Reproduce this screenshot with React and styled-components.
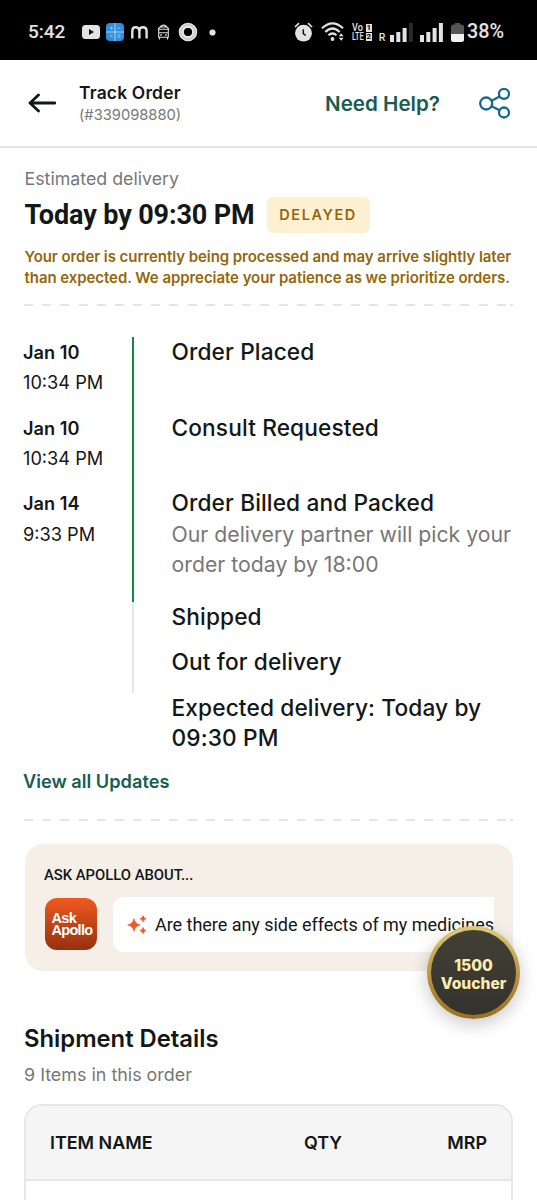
import React from "react";
import styled, { createGlobalStyle } from "styled-components";

const GlobalStyle = createGlobalStyle`
  *, *::before, *::after { box-sizing: border-box; }
  html, body { margin: 0; padding: 0; background: #fff; }
  body { width: 537px; height: 1200px; overflow: hidden; }
`;

const Screen = styled.div`
  position: relative;
  width: 537px;
  height: 1200px;
  overflow: hidden;
  background: #fff;
  color: #131716;
  font-family: Inter, sans-serif;
`;

const Text = styled.span`
  display: block;
  white-space: nowrap;
  font-family: ${(p) => p.$family || "Inter"}, sans-serif;
  font-size: ${(p) => p.$size}px;
  line-height: ${(p) => p.$line}px;
  font-weight: ${(p) => p.$weight || 400};
  letter-spacing: ${(p) => p.$track || 0}px;
  color: ${(p) => p.$color || "#131716"};
`;

const StatusBar = styled.header`
  height: 60px;
  background: #000;
  display: flex;
  align-items: center;
  justify-content: space-between;
  padding: 4px 33px 0 28px;
`;

const StatusGroup = styled.div`
  display: flex;
  align-items: center;
`;

const Icon = styled.svg`
  display: block;
  flex: none;
  margin-left: ${(p) => p.$gap || 0}px;
`;

const TopBar = styled.nav`
  height: 88px;
  display: flex;
  align-items: center;
  padding: 0 26px 0 28px;
  border-bottom: 2px solid #e3e4e4;
`;

const Titles = styled.div`
  margin-left: 23px;
  padding-top: 1px;
  flex: 1;
`;

const HelpLink = styled.div`
  margin-right: 39px;
  padding-top: 1px;
`;

const Summary = styled.section`
  height: 156px;
  padding: 19px 24.5px 0;
`;

const EtaRow = styled.div`
  display: flex;
  align-items: center;
  height: 38px;
  margin-top: 5px;
`;

const DelayBadge = styled.div`
  width: 103px;
  height: 36px;
  margin-left: 12px;
  border-radius: 6px;
  background: #fff0d2;
  display: flex;
  align-items: center;
  justify-content: center;
`;

const Notice = styled.div`
  margin-top: 11.5px;
`;

const Dashes = styled.hr`
  height: 2px;
  margin: 0 24px;
  border: 0;
  background: linear-gradient(#e6e6e6, #e6e6e6) right / 3px 2px no-repeat,
    repeating-linear-gradient(90deg, #e6e6e6 0 9px, transparent 9px 18.18px);
`;

const Timeline = styled.ol`
  list-style: none;
  margin: 0;
  padding: 30.8px 0 0 23px;
`;

const Step = styled.li`
  display: flex;
  height: ${(p) => p.$height}px;
`;

const StepDate = styled.div`
  width: 108.5px;
`;

const StepBody = styled.div`
  padding-left: 38px;
  border-left: ${(p) => (p.$state === "done" ? "2px solid #118a44" : p.$state === "todo" ? "2px solid #e6e6e6" : "2px solid transparent")};
`;

const Updates = styled.div`
  height: 65.2px;
  padding: 12.2px 0 0 23px;
`;

const AskCard = styled.section`
  height: 127px;
  margin: 23.5px 24.5px 0;
  padding: 20.5px 19px 0 19.5px;
  border-radius: 18px;
  background: #f6efe8;
`;

const AskRow = styled.div`
  display: flex;
  align-items: flex-start;
  margin-top: 12.5px;
`;

const AskLogo = styled.div`
  width: 52px;
  height: 52px;
  flex: none;
  margin: 1px 0 0 1px;
  border-radius: 12px;
  padding: 14px 0 0 6.5px;
  background: linear-gradient(#f0591f, #94310e);
`;

const PromptStrip = styled.div`
  flex: 1;
  margin-left: 15.5px;
  min-width: 0;
  height: 55px;
  overflow: hidden;
  display: flex;
  align-items: center;
  padding-left: 14px;
  border-radius: 11px 0 0 11px;
  background: #fff;
`;

const PromptText = styled.div`
  margin-left: 8.5px;
`;

const Shipment = styled.section`
  padding: 50.5px 24px 0;
`;

const ItemTable = styled.div`
  height: 120px;
  margin-top: 10px;
  border: 2px solid #e6e6e6;
  border-radius: 18px 18px 0 0;
  border-bottom: 0;
  overflow: hidden;
`;

const TableHead = styled.div`
  height: 75px;
  display: grid;
  grid-template-columns: 254px 1fr auto;
  align-items: center;
  padding: 2px 24px 0 24px;
  background: #f5f5f5;
  border-bottom: 2px solid #e6e6e6;
`;

const Voucher = styled.div`
  position: absolute;
  left: 427px;
  top: 926px;
  width: 93px;
  height: 93px;
  padding-top: 5px;
  border-radius: 50%;
  border: 4px solid transparent;
  background: linear-gradient(#424035, #34322d) padding-box,
    linear-gradient(180deg, #dccb78, #b69342 55%, #9a711e) border-box;
  box-shadow: 0 5px 18px rgba(0, 0, 0, 0.22);
  display: flex;
  flex-direction: column;
  align-items: center;
  justify-content: center;
`;

const INK = "#e2e2e2";

const NotificationIcons = () => (
  <>
    <Icon $gap={16} width="20" height="14" viewBox="0 0 20 14">
      <rect x="1" width="18" height="14" rx="3.5" fill={INK} />
      <path d="M8 4l5 3-5 3z" fill="#111" />
    </Icon>
    <Icon $gap={5} width="18" height="18" viewBox="0 0 18 18">
      <rect width="18" height="18" rx="4" fill="#2e8fdd" />
      <path d="M0 9h18M9 0v18" stroke="#c9e4f9" strokeWidth=".8" />
      <path d="M4 5.2h3M5.5 3.7v3M11.5 5.2h3M4.2 11.5l2.4 2.4m0-2.4l-2.4 2.4M11.5 12h3M11.5 14h3" stroke="#9ccdf4" strokeWidth=".9" />
    </Icon>
    <Icon $gap={7} width="17" height="13" viewBox="0 0 17 13">
      <path d="M1.3 12.5V4.8Q1.3 1.3 4.6 1.3T8.4 4.8V12.5M8.4 4.8Q8.6 1.3 12 1.3T15.6 4.8V12.5" fill="none" stroke={INK} strokeWidth="2.4" />
    </Icon>
    <Icon $gap={9} width="13" height="16" viewBox="0 0 13 16">
      <g fill="none" stroke={INK} strokeWidth="1.1">
        <path d="M3 2.8Q6.5-.6 10 2.8M1.4 5Q2 3 4 3h5q2 0 2.6 2M.8 5.2h11.4M1.7 5v8.2h9.6V5M1.7 8.7h9.6M2.5 13.2v2.4M10.5 13.2v2.4" />
        <path d="M3.2 11h1.6M8.2 11h1.6" strokeWidth="1.5" />
      </g>
    </Icon>
    <Icon $gap={8} width="20" height="20" viewBox="0 0 20 20">
      <circle cx="10" cy="10" r="6.7" fill="none" stroke={INK} strokeWidth="5.2" />
      <circle cx="10" cy="10" r="7.2" fill="none" stroke="#a6a6a6" strokeWidth=".7" />
    </Icon>
    <Icon $gap={11} width="7" height="7" viewBox="0 0 7 7">
      <circle cx="3.5" cy="3.5" r="3.1" fill={INK} />
    </Icon>
  </>
);

const VoLte = styled.div`
  width: 20px;
  margin-left: 7px;
`;

const VoRow = styled.div`
  display: flex;
  align-items: center;
  justify-content: space-between;
  height: 9px;
  color: ${INK};
`;

const VoLabel = styled.span`
  width: 13px;
  font: 500 10.5px/9px Roboto, sans-serif;
  transform: scaleX(${(p) => p.$squeeze});
  transform-origin: left center;
`;

const SimTag = styled.span`
  flex: none;
  width: 6px;
  height: 8px;
  background: ${INK};
  color: #000;
  font: 700 8px/8px Roboto, sans-serif;
  text-align: center;
`;

const Roaming = styled.div`
  align-self: flex-end;
  margin: 0 0 -1px 7px;
`;

const SystemIcons = () => (
  <>
    <Icon width="19" height="20" viewBox="0 0 19 20">
      <circle cx="9.5" cy="11.2" r="8.4" fill={INK} />
      <path d="M1 5l4-3.8M18 5l-4-3.8" stroke={INK} strokeWidth="1.7" />
      <path d="M9.3 7.3v4.4l2.4 1.8" fill="none" stroke="#111" strokeWidth="1.5" />
    </Icon>
    <Icon $gap={8} width="24" height="20" viewBox="0 0 24 20">
      <g fill="none" stroke={INK} strokeWidth="2.2">
        <path d="M1 6.3Q11.5-3.6 22 6.3" />
        <path d="M4.3 10Q11.5 3 18.7 10" />
        <path d="M7.5 13.3q4-3.6 8 0" />
      </g>
      <circle cx="11.5" cy="17" r="1.9" fill={INK} />
      <path d="M17.8 14.3l2.4-3 2.4 3zM17.8 15.8h4.8l-2.4 3z" fill={INK} />
    </Icon>
    <VoLte>
      <VoRow><VoLabel $squeeze={0.86}>Vo</VoLabel><SimTag>1</SimTag></VoRow>
      <VoRow><VoLabel $squeeze={0.7}>LTE</VoLabel><SimTag>2</SimTag></VoRow>
    </VoLte>
    <Roaming>
      <Text $size={10.5} $line={10} $weight={500} $color={INK} $family="Roboto">R</Text>
    </Roaming>
    <Icon $gap={4.5} width="23" height="19" viewBox="0 0 23 19">
      <path d="M0 12h4v7H0zM6.3 9h4v10h-4zM12.6 5h4v14h-4z" fill={INK} />
      <path d="M18.9 0h4v19h-4z" fill="#292929" />
    </Icon>
    <Icon $gap={7} width="23" height="19" viewBox="0 0 23 19">
      <path d="M0 12h4v7H0zM6.3 9h4v10h-4zM12.6 5h4v14h-4zM18.9 0h4v19h-4z" fill={INK} />
    </Icon>
    <Icon $gap={8} width="13" height="19" viewBox="0 0 13 19">
      <path d="M4 0h5v1.5h1.5Q13 1.5 13 4v7H0V4Q0 1.5 2.5 1.5H4z" fill="#555" />
      <path d="M0 11h13v5.5q0 2.5-2.5 2.5h-8Q0 19 0 16.5z" fill="#f0f0f0" />
    </Icon>
  </>
);

const Percent = styled.div`
  margin-left: 3px;
`;

const steps = [
  { date: "Jan 10", time: "10:34 PM", lines: ["Order Placed"], height: 75.75, state: "done" },
  { date: "Jan 10", time: "10:34 PM", lines: ["Consult Requested"], height: 75.75, state: "done" },
  {
    date: "Jan 14",
    time: "9:33 PM",
    lines: ["Order Billed and Packed"],
    note: ["Our delivery partner will pick your", "order today by 18:00"],
    height: 113.6,
    state: "done",
  },
  { lines: ["Shipped"], height: 45.45, state: "todo" },
  { lines: ["Out for delivery"], height: 45.45, state: "todo" },
  { lines: ["Expected delivery: Today by", "09:30 PM"], height: 60.6, state: "none" },
];

export default function App() {
  return (
    <Screen>
      <GlobalStyle />
      <StatusBar>
        <StatusGroup>
          <Text $size={19} $line={20} $weight={500} $color={INK} $family="Roboto">5:42</Text>
          <NotificationIcons />
        </StatusGroup>
        <StatusGroup>
          <SystemIcons />
          <Percent>
            <Text $size={19.8} $line={20} $weight={500} $color={INK} $family="Roboto">38%</Text>
          </Percent>
        </StatusGroup>
      </StatusBar>

      <TopBar>
        <Icon width="28" height="20" viewBox="0 0 28 20">
          <path d="M27 10H2M10.5 2L2 10l8.5 8" fill="none" stroke="#131716" strokeWidth="2.8" strokeLinecap="round" strokeLinejoin="round" />
        </Icon>
        <Titles>
          <Text $size={17.4} $line={24} $weight={600} $track={0.2}>Track Order</Text>
          <Text $size={14.7} $line={21} $color="#777">(#339098880)</Text>
        </Titles>
        <HelpLink>
          <Text $size={20.6} $line={28} $weight={600} $color="#195c50">Need Help?</Text>
        </HelpLink>
        <Icon width="32" height="32" viewBox="0 0 32 32">
          <g fill="none" stroke="#176984" strokeWidth="2.3">
            <circle cx="7.2" cy="16.5" r="6" />
            <circle cx="25" cy="6.8" r="5" />
            <circle cx="25" cy="25.5" r="5" />
            <path d="M12.6 13.8l8-4.4M12.6 19.2l8 4" />
          </g>
        </Icon>
      </TopBar>

      <Summary>
        <Text $size={17.8} $line={24} $color="#777">Estimated delivery</Text>
        <EtaRow>
          <Text $size={27} $line={36} $weight={700} $track={-0.12} $family="Roboto">Today by 09:30 PM</Text>
          <DelayBadge>
            <Text $size={14.5} $line={20} $weight={600} $track={1.6} $color="#94670c">DELAYED</Text>
          </DelayBadge>
        </EtaRow>
        <Notice>
          <Text $size={15} $line={21.2} $weight={600} $track={-0.06} $color="#94670c">Your order is currently being processed and may arrive slightly later</Text>
          <Text $size={15} $line={21.2} $weight={600} $track={-0.06} $color="#94670c">than expected. We appreciate your patience as we prioritize orders.</Text>
        </Notice>
      </Summary>
      <Dashes />

      <Timeline>
        {steps.map((s, i) => (
          <Step key={i} $height={s.height}>
            <StepDate>
              {s.date && <Text $size={18.2} $line={30.3} $weight={600}>{s.date}</Text>}
              {s.time && <Text $size={18.2} $line={30.3}>{s.time}</Text>}
            </StepDate>
            <StepBody $state={s.state}>
              {s.lines.map((l) => (
                <Text key={l} $size={22.7} $line={30.3} $weight={500} $track={0.12}>{l}</Text>
              ))}
              {s.note && s.note.map((l) => (
                <Text key={l} $size={21.25} $line={30.3} $color="#777">{l}</Text>
              ))}
            </StepBody>
          </Step>
        ))}
      </Timeline>
      <Updates>
        <Text $size={18.2} $line={30} $weight={600} $color="#195c50">View all Updates</Text>
      </Updates>
      <Dashes />

      <AskCard>
        <Text $size={14.8} $line={20} $weight={500} $family="Roboto">ASK APOLLO ABOUT...</Text>
        <AskRow>
          <AskLogo>
            <Text $size={14.5} $line={12} $weight={700} $track={-0.7} $color="#fff" $family="'Liberation Sans'">Ask</Text>
            <Text $size={14.5} $line={12} $weight={700} $track={-0.7} $color="#fff" $family="'Liberation Sans'">Apollo</Text>
          </AskLogo>
          <PromptStrip>
            <Icon width="20" height="20" viewBox="0 0 20 20">
              <path d="M7 3.6q1 5.400 6.400 6.400Q8 11 7 16.400 6 11 .6 10 6 9 7 3.600zM16 .6q.6 2.600 3.200 3.200-2.600.6-3.200 3.200-.6-2.600-3.200-3.200 2.600-.6 3.200-3.200zM16 12.400q.6 2.600 3.200 3.200-2.600.6-3.200 3.200-.6-2.600-3.200-3.200 2.600-.6 3.200-3.200z" fill="#ed5a2a" stroke="#ed5a2a" strokeWidth=".6" />
            </Icon>
            <PromptText>
              <Text $size={18} $line={24} $track={-0.03} $family="Roboto">Are there any side effects of my medicines?</Text>
            </PromptText>
          </PromptStrip>
        </AskRow>
      </AskCard>

      <Shipment>
        <Text $size={23.8} $line={33} $weight={600}>Shipment Details</Text>
        <Text $size={17.9} $line={39} $color="#777">9 Items in this order</Text>
        <ItemTable>
          <TableHead>
            <Text $size={17.9} $line={24} $weight={600}>ITEM NAME</Text>
            <Text $size={17.9} $line={24} $weight={600}>QTY</Text>
            <Text $size={17.9} $line={24} $weight={600}>MRP</Text>
          </TableHead>
        </ItemTable>
      </Shipment>

      <Voucher>
        <Text $size={15.6} $line={18} $weight={800} $color="#fbecb0">1500</Text>
        <Text $size={15.6} $line={18} $weight={800} $color="#fbecb0">Voucher</Text>
      </Voucher>
    </Screen>
  );
}
